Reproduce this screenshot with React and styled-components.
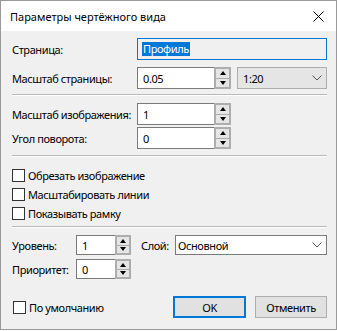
import React from 'react';
import styled, { createGlobalStyle } from 'styled-components';

const GlobalStyle = createGlobalStyle`
  body {
    margin: 0;
    background: #ffffff;
    font-family: "Noto Sans", "Liberation Sans", sans-serif;
    font-size: 11px;
    letter-spacing: -0.4px;
    color: #000;
  }
`;

const Window = styled.div`
  width: 337px;
  height: 330px;
  box-sizing: border-box;
  border: 1px solid #9a9a9a;
  display: flex;
  flex-direction: column;
  background: #f0f0f0;
`;

const TitleBar = styled.div`
  height: 30px;
  background: #ffffff;
  display: flex;
  align-items: center;
  justify-content: space-between;
  flex-shrink: 0;
`;

const Title = styled.div`
  padding-left: 9px;
  font-size: 11px;
  letter-spacing: 0;
`;

const CloseButton = styled.div`
  width: 46px;
  height: 30px;
  display: flex;
  align-items: center;
  justify-content: center;
  margin-right: -5px;
`;

const Body = styled.div`
  flex: 1;
  padding: 7px 9px 0 11px;
  display: flex;
  flex-direction: column;
`;

const Row = styled.div`
  display: flex;
  align-items: center;
  height: ${p => p.$h || 22}px;
  margin-top: ${p => p.$mt || 0}px;
`;

const Label = styled.div`
  width: ${p => p.$w}px;
  margin-left: ${p => p.$ml || 0}px;
  flex-shrink: 0;
  white-space: nowrap;
`;

const TextField = styled.div`
  flex: 1;
  height: 100%;
  box-sizing: border-box;
  border: 1px solid #0078d7;
  background: #f0f0f0;
  display: flex;
  align-items: center;
  padding-left: 4px;
`;

const Selected = styled.span`
  background: #0078d7;
  color: #fff;
  line-height: 14px;
  padding: 0 1px;
`;

const Spin = styled.div`
  display: flex;
  height: 100%;
  width: ${p => p.$w}px;
  flex-shrink: 0;
`;

const SpinField = styled.div`
  flex: 1;
  box-sizing: border-box;
  border: 1px solid #7a7a7a;
  border-right: none;
  background: #fff;
  display: flex;
  align-items: center;
  padding-left: 5px;
`;

const SpinButtons = styled.div`
  width: ${p => p.$w || 17}px;
  box-sizing: border-box;
  border: 1px solid #adadad;
  background: #adadad;
  display: flex;
  flex-direction: column;
  gap: 1px;
  padding: 1px;
`;

const SpinBtn = styled.div`
  flex: 1;
  background: #e5e5e5;
  display: flex;
  align-items: center;
  justify-content: center;
  &::after {
    content: '';
    border-left: 3px solid transparent;
    border-right: 3px solid transparent;
    ${p => p.$down ? 'border-top: 4px solid #000;' : 'border-bottom: 4px solid #000;'}
  }
`;

const Combo = styled.div`
  height: 100%;
  box-sizing: border-box;
  flex: 1;
  margin-left: ${p => p.$ml || 0}px;
  border: 1px solid ${p => p.$flat ? '#adadad' : '#7a7a7a'};
  background: ${p => p.$flat ? '#e5e5e5' : '#ffffff'};
  display: flex;
  align-items: center;
  justify-content: space-between;
  padding: 0 4px 0 ${p => p.$pl || 4}px;
`;

const Separator = styled.div`
  height: 1px;
  background: #b9b9b9;
  border-bottom: 1px solid #ffffff;
  margin-top: ${p => p.$mt}px;
`;

const CheckRow = styled.div`
  display: flex;
  align-items: center;
  height: 18px;
  white-space: nowrap;
  flex-shrink: 0;
  margin-top: ${p => p.$mt || 0}px;
  margin-left: ${p => p.$ml || 0}px;
`;

const Box = styled.div`
  width: 13px;
  height: 13px;
  box-sizing: border-box;
  border: 1px solid #333333;
  background: #ffffff;
  margin-right: 3px;
  flex-shrink: 0;
`;

const Group = styled.div`
  display: flex;
  flex-direction: column;
  margin-top: ${p => p.$mt}px;
`;

const Footer = styled.div`
  display: flex;
  align-items: center;
  margin-top: ${p => p.$mt}px;
  height: 22px;
`;

const Button = styled.div`
  width: ${p => p.$w}px;
  height: 22px;
  box-sizing: border-box;
  flex-shrink: 0;
  background: #e1e1e1;
  border: ${p => p.$primary ? '2px solid #0078d7' : '1px solid #adadad'};
  display: flex;
  align-items: center;
  justify-content: center;
  margin-left: ${p => p.$ml};
`;

const Chevron = () => (
  <svg width="10" height="6" viewBox="0 0 10 6">
    <path d="M0.5 0.5 L5 5 L9.5 0.5" fill="none" stroke="#555" strokeWidth="1" />
  </svg>
);

const SpinBox = ({ value, w, bw }) => (
  <Spin $w={w}>
    <SpinField>{value}</SpinField>
    <SpinButtons $w={bw}>
      <SpinBtn />
      <SpinBtn $down />
    </SpinButtons>
  </Spin>
);

const Check = ({ label, mt, ml }) => (
  <CheckRow $mt={mt} $ml={ml}>
    <Box />
    {label}
  </CheckRow>
);

export default function App() {
  return (
    <>
      <GlobalStyle />
      <Window>
        <TitleBar>
          <Title>Параметры чертёжного вида</Title>
          <CloseButton>
            <svg width="11" height="11" viewBox="0 0 11 11">
              <path d="M0.5 0.5 L10.5 10.5 M10.5 0.5 L0.5 10.5" stroke="#000" strokeWidth="1" />
            </svg>
          </CloseButton>
        </TitleBar>
        <Body>
          <Row>
            <Label $w={125}>Страница:</Label>
            <TextField><Selected>Профиль</Selected></TextField>
          </Row>
          <Row $mt={7}>
            <Label $w={125}>Масштаб страницы:</Label>
            <SpinBox value="0.05" w={94} />
            <Combo $flat $ml={6} $pl={5}>
              1:20
              <Chevron />
            </Combo>
          </Row>
          <Separator $mt={5} />
          <Row $mt={7}>
            <Label $w={125}>Масштаб изображения:</Label>
            <SpinBox value="1" w={94} />
          </Row>
          <Row $mt={2}>
            <Label $w={125}>Угол поворота:</Label>
            <SpinBox value="0" w={94} />
          </Row>
          <Separator $mt={6} />
          <Check label="Обрезать изображение" mt={9} />
          <Check label="Масштабировать линии" mt={1} />
          <Check label="Показывать рамку" mt={1} />
          <Separator $mt={4} />
          <Group $mt={7}>
            <Row $h={20}>
              <Label $w={64}>Уровень:</Label>
              <SpinBox value="1" w={55} bw={16} />
              <Label $w={34} $ml={10}>Слой:</Label>
              <Combo $pl={2}>
                Основной
                <Chevron />
              </Combo>
            </Row>
            <Row $h={20} $mt={4}>
              <Label $w={64}>Приоритет:</Label>
              <SpinBox value="0" w={55} bw={16} />
            </Row>
          </Group>
          <Footer $mt={17}>
            <Check label="По умолчанию" ml={1} />
            <Button $primary $w={73} $ml="auto">OK</Button>
            <Button $w={72} $ml="9px">Отменить</Button>
          </Footer>
        </Body>
      </Window>
    </>
  );
}
